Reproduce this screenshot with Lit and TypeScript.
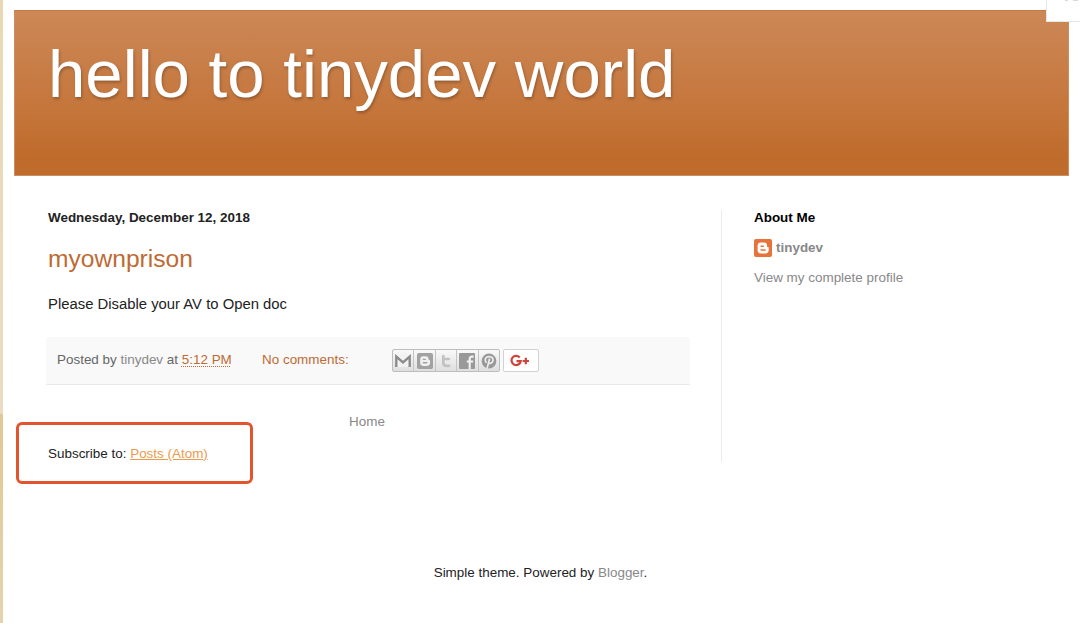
import { LitElement, html, css, svg } from "lit";
import { customElement } from "lit/decorators.js";

const bloggerGlyph = (bg: string, fg: string) => svg`
  <rect x="0" y="0" width="18" height="18" rx="2" fill=${bg}></rect>
  <path fill=${fg} d="M7 3.6h2.8a3.3 3.3 0 0 1 3.3 3.3c0 .9.3 1.1.8 1.1.6 0 .8.4.8.9v2.2a3.4 3.4 0 0 1-3.4 3.4H7a3.4 3.4 0 0 1-3.4-3.4V7A3.4 3.4 0 0 1 7 3.6z"></path>
  <path stroke=${bg} stroke-width="1.5" stroke-linecap="round" d="M7.1 7.2h2.2M7.1 11h4"></path>`;

@customElement("share-buttons")
class ShareButtons extends LitElement {
  static styles = css`
    :host { display: flex; gap: 3px; }
    .group {
      display: flex; box-sizing: border-box; width: 108px; height: 23px;
      border: 1px solid #bdbdbd; border-radius: 2px; overflow: hidden;
      background: linear-gradient(#f9f9f9, #dedede);
    }
    .btn {
      flex: 1; display: flex; align-items: center; justify-content: center;
      border-left: 1px solid #c4c4c4;
    }
    .btn:first-child { border-left: none; }
    .plus {
      box-sizing: border-box; width: 36px; height: 23px; border: 1px solid #d2d2d2;
      border-radius: 2px; background: #fff; display: flex; align-items: center; justify-content: center;
      padding-right: 2px;
    }
    svg { display: block; }
  `;
  render() {
    return html`
      <div class="group">
        <div class="btn"><svg width="18" height="18" viewBox="0 0 18 18">
          <rect x="2" y="4" width="14" height="11" fill="#f2f2f2"></rect>
          <path d="M2.3 15V4.6L9 10.5l6.7-5.9V15" fill="none" stroke="#8c8c8c" stroke-width="2.4"></path></svg></div>
        <div class="btn"><svg width="16" height="16" viewBox="0 0 18 18">${bloggerGlyph("#a2a2a2", "#f0f0f0")}</svg></div>
        <div class="btn"><svg width="18" height="18" viewBox="0 0 18 18">
          <path d="M6.3 4v6.7c0 2 1.1 3.1 3 3.1h2.8M6.3 7h5.5" fill="none" stroke="#c2c2c2" stroke-width="2.7" stroke-linecap="round"></path></svg></div>
        <div class="btn"><svg width="16" height="16" viewBox="0 0 16 16">
          <rect width="16" height="16" rx="1" fill="#999"></rect>
          <path d="M10.7 16V5.8c0-1.5.8-2.2 2.2-2.2h1.7M7.8 8.5h6.4" fill="none" stroke="#f2f2f2" stroke-width="2.1"></path></svg></div>
        <div class="btn"><svg width="16" height="16" viewBox="0 0 16 16">
          <circle cx="8" cy="8" r="7.4" fill="#999"></circle>
          <path d="M5 9.2C3 6 5 3.6 8.2 3.6c3 0 4.3 2 3.7 4.2-.6 2.7-3.4 3.3-4.4 1.7M8.4 6.2 6.3 14.6" fill="none" stroke="#ececec" stroke-width="1.7" stroke-linecap="round"></path></svg></div>
      </div>
      <div class="plus"><svg width="20" height="14" viewBox="0 0 20 14">
        <path d="M9.7 3.5A4.6 4.6 0 1 0 10.7 7.2H6.5M12.6 7h6.4M15.8 3.8v6.4" fill="none" stroke="#d0453b" stroke-width="2.2"></path></svg></div>
    `;
  }
}

@customElement("app-root")
class AppRoot extends LitElement {
  static styles = css`
    :host {
      display: block; position: relative; height: 623px; overflow: hidden; background: #fff;
      font: 13.45px/16px "Liberation Sans", Arial, sans-serif; color: #222;
    }
    .page { display: grid; grid-template-columns: 3px 1fr; height: 100%; }
    .edge { background: linear-gradient(#e9d8b4 0, #e9dcc0 414px, #dfc899 414px, #e6d3aa 100%); }
    .sheet { padding: 10px 11px 0; }
    header {
      box-sizing: border-box; height: 166px; padding: 24px 33px 0;
      background: linear-gradient(#cc8857, #c47337 68%, #be6b2b 90%, #be6b2b);
      border: 1px solid #cc8d60; border-top-color: #c67a43;
    }
    h1 {
      margin: 0; font-size: 67.2px; line-height: 78px; font-weight: 400; color: #fff;
      text-shadow: 1px 2px 3px rgba(0, 0, 0, 0.25); white-space: nowrap;
    }
    .columns { display: grid; grid-template-columns: 708px 1fr; margin-top: 34px; height: 252px; }
    main { padding-left: 32px; border-right: 1px solid #ececec; }
    .line { padding-left: 2px; white-space: nowrap; }
    h2 { margin: 0; font-size: 13.45px; line-height: 16px; font-weight: 700; }
    h3 { margin: 18px 0 0; font-size: 24.6px; line-height: 30px; font-weight: 400; color: #bf6a33; }
    .body { margin-top: 21px; font-size: 14.85px; line-height: 18px; }
    .meta {
      display: flex; box-sizing: border-box; width: 644px; height: 48px; margin-top: 24px;
      padding: 12px 0 0 11px; background: #f9f9f9; border-bottom: 1px solid #e9e9e9; color: #666;
      white-space: nowrap;
    }
    .by { width: 205px; padding-top: 3px; }
    .comments { width: 130px; padding-top: 3px; color: #bf6a33; }
    .time { color: #bf6a33; text-decoration: underline dotted; text-decoration-thickness: 1px; text-underline-offset: 2px; }
    .muted { color: #888; }
    .home { width: 642px; margin-top: 29px; text-align: center; color: #888; }
    .feed { margin-top: 16px; }
    .atom { color: #ef9a4b; text-decoration: underline; }
    aside { padding-left: 32px; }
    aside h2 { color: #000; }
    .person { display: flex; gap: 4px; height: 18px; margin-top: 13px; font-weight: 700; color: #888; }
    .name { padding-top: 1px; }
    .profile { margin-top: 13px; color: #888; }
    footer { margin-top: 103px; padding-right: 2px; text-align: center; }
    .callout {
      position: absolute; left: 16px; top: 422px; box-sizing: border-box; width: 237px; height: 62px;
      border: 3px solid #e2552f; border-radius: 6px;
    }
    .corner {
      position: absolute; right: -1px; top: -1px; box-sizing: border-box; width: 35px; height: 23px;
      background: #fff; border: 1px solid #e6e6e6;
    }
    svg { display: block; }
  `;
  render() {
    return html`
      <div class="page">
        <div class="edge"></div>
        <div class="sheet">
          <header><h1>hello to tinydev world</h1></header>
          <div class="columns">
            <main>
              <h2 class="line">Wednesday, December 12, 2018</h2>
              <h3 class="line">myownprison</h3>
              <div class="line body">Please Disable your AV to Open doc</div>
              <div class="meta">
                <div class="by">Posted by <span class="muted">tinydev</span> at <span class="time">5:12 PM</span></div>
                <div class="comments">No comments:</div>
                <share-buttons></share-buttons>
              </div>
              <div class="home">Home</div>
              <div class="line feed">Subscribe to: <span class="atom">Posts (Atom)</span></div>
            </main>
            <aside>
              <h2>About Me</h2>
              <div class="person">
                <svg width="18" height="18" viewBox="0 0 18 18">${bloggerGlyph("#e8733a", "#fff")}</svg>
                <span class="name">tinydev</span>
              </div>
              <div class="profile">View my complete profile</div>
            </aside>
          </div>
          <footer>Simple theme. Powered by <span class="muted">Blogger</span>.</footer>
        </div>
      </div>
      <div class="callout"></div>
      <div class="corner"><svg width="33" height="3" viewBox="0 0 33 3">
        <path d="M18 .5h3M26 .5h5" stroke="#d8d8d8" stroke-width="1"></path></svg></div>
    `;
  }
}
